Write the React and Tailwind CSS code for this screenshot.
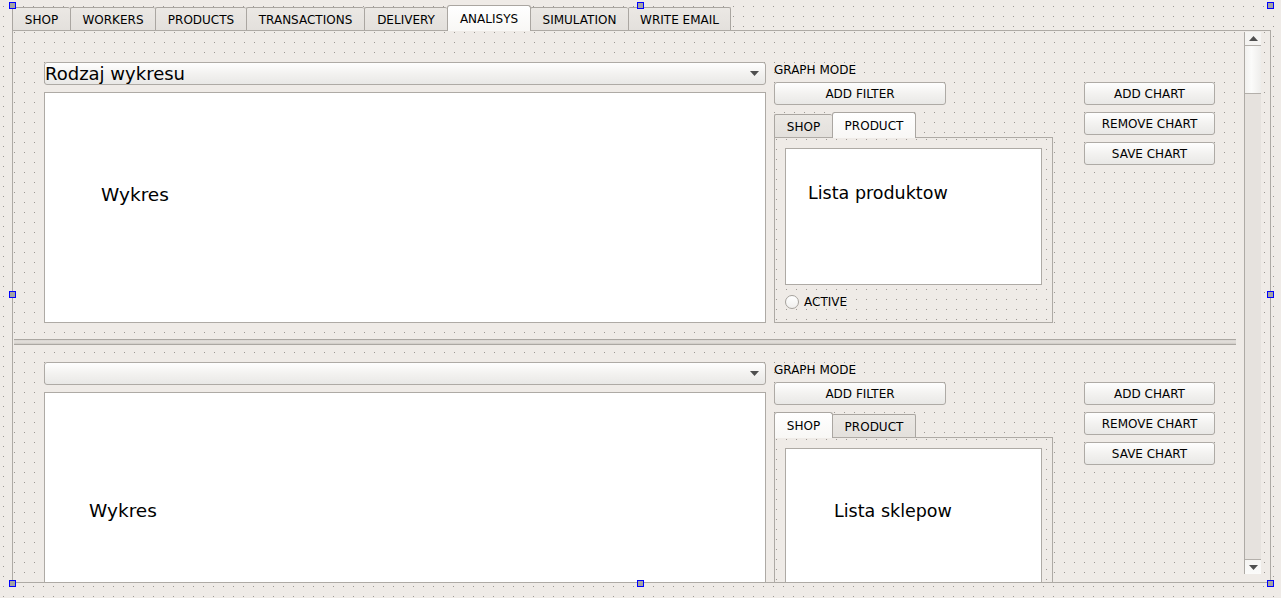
import React from 'react'

// Qt Designer form grid: 1px dots every 10px
const DOTS =
  'bg-[radial-gradient(circle_at_1.5px_1.5px,#9d9994_0.6px,transparent_0.9px)] bg-size-[10px_10px]'
const FRAME = 'border border-[#aeaaa5]'
const RAISED = 'bg-[linear-gradient(#fefefe,#f3f2f0_50%,#e9e8e6)]'

const mainTabs = [
  { label: 'SHOP', w: 'w-[58px]' },
  { label: 'WORKERS', w: 'w-[85px]' },
  { label: 'PRODUCTS', w: 'w-[91px]' },
  { label: 'TRANSACTIONS', w: 'w-[118px]' },
  { label: 'DELIVERY', w: 'w-[83px]' },
  { label: 'ANALISYS', w: 'w-[84px]', active: true },
  { label: 'SIMULATION', w: 'w-[98px]' },
  { label: 'WRITE EMAIL', w: 'w-[103px]', last: true },
]

const Tab = ({ label, w, active, last }) => {
  if (active) {
    return (
      <div
        className={`${w} relative z-10 -mr-px -mb-px flex h-[26px] items-center justify-center rounded-t-[3px] border border-b-0 border-[#aaa6a1] bg-[linear-gradient(#ffffff,#f8f7f5)] text-[12px] text-black`}
      >
        {label}
      </div>
    )
  }
  return (
    <div
      className={`${w} flex h-[23px] items-center justify-center border-t border-l ${last ? 'border-r' : ''} rounded-t-[2px] border-[#aaa6a1] bg-[linear-gradient(#ebe8e4,#e3e0dc)] pt-px text-[12px] text-black`}
    >
      {label}
    </div>
  )
}

const Arrow = ({ up }) => (
  <svg width="9" height="5" viewBox="0 0 9 5" className="block">
    <path d={up ? 'M0 5 L4.5 0 L9 5 Z' : 'M0 0 L9 0 L4.5 5 Z'} fill="#4f4f4f" />
  </svg>
)

const Button = ({ children, w }) => (
  <div
    className={`${w} flex h-[23px] items-center justify-center rounded-[3px] ${FRAME} ${RAISED} text-[12px] text-black`}
  >
    {children}
  </div>
)

const ComboBox = ({ text }) => (
  <div
    className={`flex h-[23px] w-full items-center justify-between rounded-[3px] ${FRAME} ${RAISED} pr-[6px]`}
  >
    <span className="text-[18px] leading-[21px] text-black">{text}</span>
    <Arrow />
  </div>
)

const FilterTabs = ({ shopActive, listText, listPad, showRadio }) => (
  <div className="flex flex-col">
    <div className="flex h-[25px] items-end">
      <Tab label="SHOP" w={shopActive ? 'w-[59px]' : 'w-[58px]'} active={shopActive} />
      <Tab label="PRODUCT" w="w-[84px]" active={!shopActive} last={shopActive} />
    </div>
    <div className={`h-[186px] w-[279px] ${FRAME} ${DOTS} bg-[#efebe7] p-[10px]`}>
      <div className={`h-[137px] w-[257px] ${FRAME} bg-white ${listPad}`}>
        <span className="text-[17.5px] leading-[20px] text-black">{listText}</span>
      </div>
      {showRadio && (
        <div className="mt-[10px] flex h-[14px] items-center gap-[5px]">
          <div className="h-[14px] w-[14px] rounded-full border border-[#a6a29d] bg-[linear-gradient(#ffffff,#f0efed)]" />
          <span className="text-[12px] leading-[14px] text-black">ACTIVE</span>
        </div>
      )}
    </div>
  </div>
)

const ChartSection = ({ comboText, chartPad, shopActive, listText, listPad, showRadio, className }) => (
  <div className={`flex gap-[8px] pl-[31px] ${className}`}>
    <div className="flex w-[722px] flex-col gap-[7px]">
      <ComboBox text={comboText} />
      <div className={`h-[231px] w-full ${FRAME} bg-white ${chartPad}`}>
        <span className="text-[18.5px] leading-[22px] text-black">Wykres</span>
      </div>
    </div>
    <div className="flex w-[279px] flex-col">
      <div className="h-[20px] text-[12px] leading-[16px] text-black">GRAPH MODE</div>
      <Button w="w-[172px]">ADD FILTER</Button>
      <div className="mt-[7px]">
        <FilterTabs
          shopActive={shopActive}
          listText={listText}
          listPad={listPad}
          showRadio={showRadio}
        />
      </div>
    </div>
    <div className="ml-[23px] flex flex-col gap-[7px] pt-[20px]">
      <Button w="w-[131px]">ADD CHART</Button>
      <Button w="w-[131px]">REMOVE CHART</Button>
      <Button w="w-[131px]">SAVE CHART</Button>
    </div>
  </div>
)

const ScrollBar = () => (
  <div className="mt-px flex h-[542px] w-[17px] flex-col border-l border-[#aeaaa5]">
    <div className="flex h-[14px] items-center justify-center border-b border-[#b3afaa] bg-[#f5f4f2]">
      <Arrow up />
    </div>
    <div className="h-[48px] border-b border-[#b3afaa] bg-[linear-gradient(90deg,#f2f1ef,#fbfbfa_40%,#eeedeb)]" />
    <div className="flex-1 bg-[#e6e2de]" />
    <div className="flex h-[15px] items-center justify-center border-t border-[#b3afaa] bg-[linear-gradient(#f6f5f3,#fbfbfa)]">
      <Arrow />
    </div>
  </div>
)

const handles = [
  'left-[9px] top-[2px]',
  'left-[637px] top-[2px]',
  'left-[1267px] top-[2px]',
  'left-[9px] top-[291px]',
  'left-[1267px] top-[291px]',
  'left-[9px] top-[580px]',
  'left-[637px] top-[580px]',
  'left-[1267px] top-[580px]',
]

export default function App() {
  return (
    <div
      className={`relative h-[598px] w-[1281px] overflow-hidden bg-[#efebe7] ${DOTS} bg-position-[2px_5px] pt-[5px] pl-[12px] font-['DejaVu_Sans','Liberation_Sans',sans-serif]`}
    >
      <div className="flex w-[1259px] flex-col">
        <div className="flex h-[25px] items-end">
          {mainTabs.map((t) => (
            <Tab key={t.label} {...t} />
          ))}
        </div>
        <div className={`flex h-[553px] ${FRAME} border-[#a9a5a0] bg-[#efebe7] ${DOTS}`}>
          <div className="h-full w-[1231px] overflow-hidden">
            <ChartSection
              className="pt-[31px] pb-[16px]"
              comboText="Rodzaj wykresu"
              chartPad="pt-[91px] pl-[56px]"
              shopActive={false}
              listText="Lista produktow"
              listPad="pt-[33px] pl-[22px]"
              showRadio
            />
            {/* splitter handle */}
            <div className="ml-px h-[6px] w-[1222px] border-t border-b border-[#aba7a2] bg-[linear-gradient(#d9d5d1,#e4e0dc_50%,#cdc9c4)]" />
            <ChartSection
              className="pt-[17px]"
              comboText=""
              chartPad="pt-[107px] pl-[44px]"
              shopActive={true}
              listText="Lista sklepow"
              listPad="pt-[51px] pl-[48px]"
              showRadio={false}
            />
          </div>
          <ScrollBar />
        </div>
      </div>

      {handles.map((pos) => (
        <div
          key={pos}
          className={`absolute ${pos} h-[7px] w-[7px] border border-[#0000ff] bg-[#a3a3a3]`}
        />
      ))}
    </div>
  )
}
